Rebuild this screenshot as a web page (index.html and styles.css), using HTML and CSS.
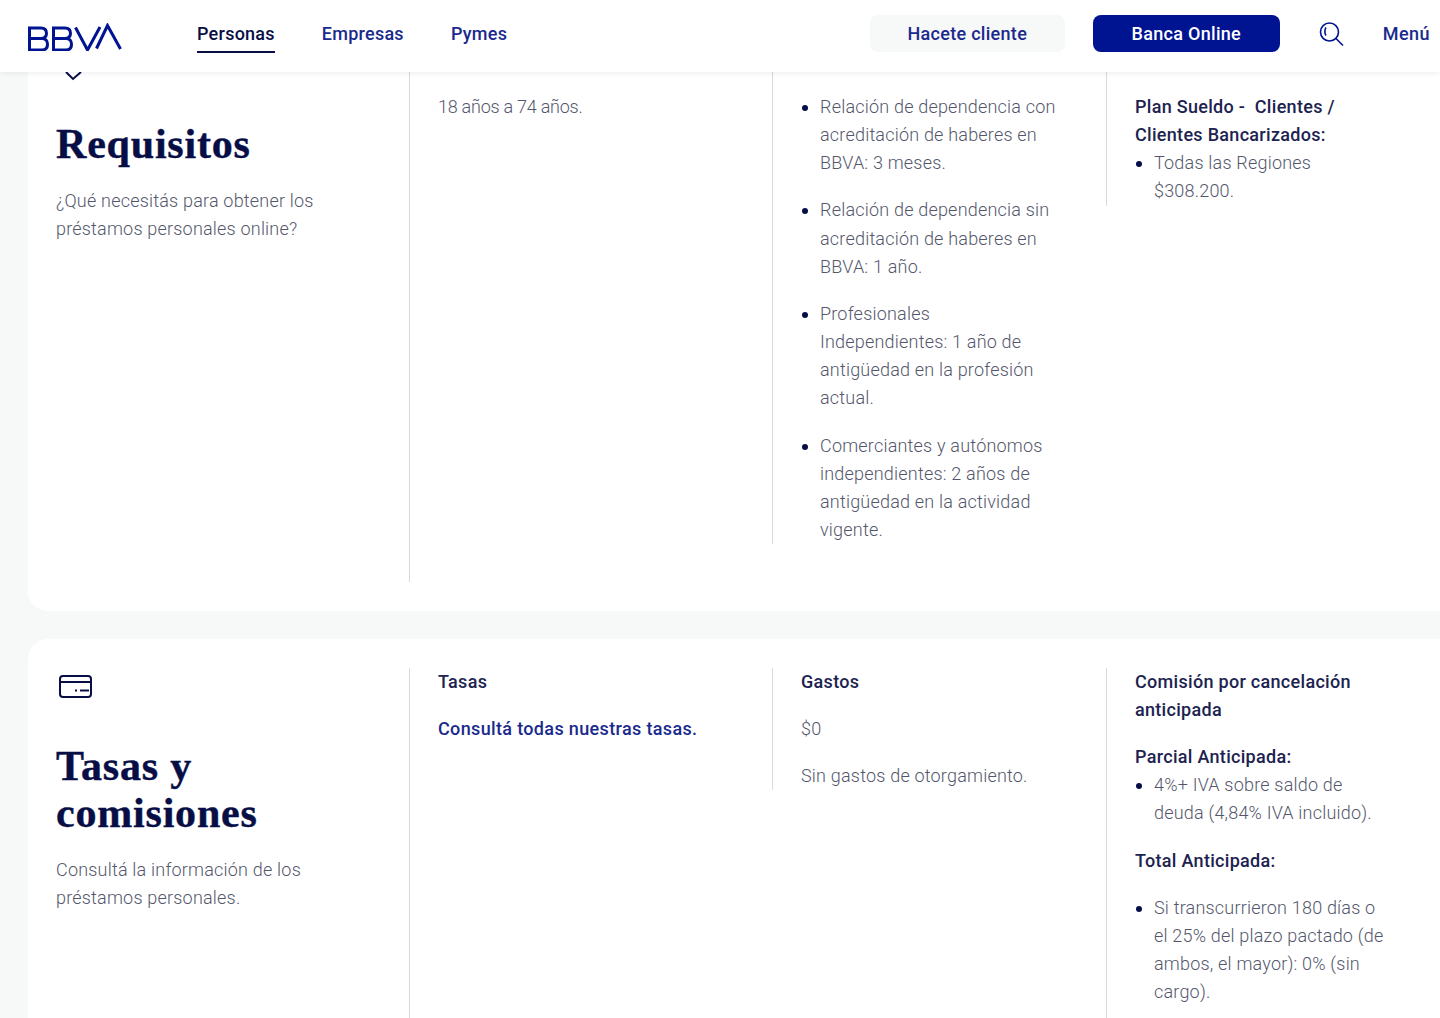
FILE: index.html
```html
<!DOCTYPE html>
<html>
<head>
  <title>Préstamos personales | BBVA</title>
  <link rel="stylesheet" href="styles.css">
</head>
<body>
  <!-- Header -->
  <header class="header">
    <svg class="logo" viewBox="0 0 94 28" fill="none" stroke="#001391" stroke-width="3">
      <path d="M1.500 5h11.500c3.500 0 5.500 2 5.500 5.300s-2 5.200-5.500 5.200H1.500M1.500 3.500V27h12.500c3.500 0 5.500-2.200 5.500-5.700s-2-5.800-5.500-5.800"></path>
      <path d="M25.500 5h11.500c3.500 0 5.500 2 5.500 5.300s-2 5.200-5.500 5.200H25.500M25.500 3.500V27h12.500c3.500 0 5.500-2.200 5.500-5.700s-2-5.800-5.500-5.800"></path>
      <path d="M47.500 4.500l12 22.500 12.500-23"></path>
      <path d="M68.500 25.500l11-23 13 23.500"></path>
    </svg>
    <nav class="nav">
      <a class="nav-link active">Personas</a>
      <a class="nav-link">Empresas</a>
      <a class="nav-link">Pymes</a>
    </nav>
    <div class="header-actions">
      <a class="btn btn-light">Hacete cliente</a>
      <a class="btn btn-primary">Banca Online</a>
      <svg class="search-icon" viewBox="0 0 26 26" fill="none" stroke="#001391" stroke-width="1.6">
        <circle cx="10.500" cy="11" r="9"></circle>
        <path d="M7 6.500c-1.500 2-1.500 6 0 8M17 17.500l7 7"></path>
      </svg>
      <a class="menu-link">Menú</a>
    </div>
  </header>

  <main class="main">
    <!-- Requisitos -->
    <section class="card card-top">
      <div class="intro">
        <svg class="intro-icon" viewBox="0 0 40 56" fill="none" stroke="#070e46" stroke-width="2">
          <path d="M10 26l7 7 8-7"></path>
        </svg>
        <h2>Requisitos</h2>
        <p>¿Qué necesitás para obtener los préstamos personales online?</p>
      </div>
      <div class="col col-a">
        <p class="age">18 años a 74 años.</p>
      </div>
      <div class="col col-b col-long">
        <ul class="spaced">
          <li>Relación de dependencia con acreditación de haberes en BBVA: 3 meses.</li>
          <li>Relación de dependencia sin acreditación de haberes en BBVA: 1 año.</li>
          <li>Profesionales Independientes: 1 año de antigüedad en la profesión actual.</li>
          <li>Comerciantes y autónomos independientes: 2 años de antigüedad en la actividad vigente.</li>
        </ul>
      </div>
      <div class="col col-c">
        <p class="strong tight">Plan Sueldo - &nbsp;Clientes / Clientes Bancarizados:</p>
        <ul>
          <li>Todas las Regiones $308.200.</li>
        </ul>
      </div>
    </section>

    <!-- Tasas y comisiones -->
    <section class="card">
      <div class="intro">
        <svg class="intro-icon" viewBox="0 0 40 56" fill="none" stroke="#070e46" stroke-width="2">
          <rect x="4" y="8" width="31" height="21" rx="3"></rect>
          <path d="M4 14h31M24 22.500h9M19 22.500h2"></path>
        </svg>
        <h2>Tasas y comisiones</h2>
        <p>Consultá la información de los préstamos personales.</p>
      </div>
      <div class="col col-a">
        <p class="strong">Tasas</p>
        <p><a class="link">Consultá todas nuestras tasas.</a></p>
      </div>
      <div class="col col-b">
        <p class="strong">Gastos</p>
        <p>$0</p>
        <p class="last">Sin gastos de otorgamiento.</p>
      </div>
      <div class="col col-c col-tall">
        <p class="strong">Comisión por cancelación anticipada</p>
        <p class="strong tight">Parcial Anticipada:</p>
        <ul>
          <li>4%+ IVA sobre saldo de deuda (4,84% IVA incluido).</li>
        </ul>
        <p class="strong">Total Anticipada:</p>
        <ul>
          <li>Si transcurrieron 180 días o el 25% del plazo pactado (de ambos, el mayor): 0% (sin cargo).</li>
        </ul>
      </div>
    </section>
  </main>
</body>
</html>
```

FILE: styles.css
```css
/* Base styles */
html,
body {
  height: 1018px;
  overflow: hidden;
}

body {
  margin: 0;
  background: #f7f8f8;
  font-family: Roboto, "Liberation Sans", sans-serif;
  font-size: 18px;
  font-weight: 300;
  line-height: 28.16px;
  letter-spacing: 0.2px;
  color: #54576c;
}

p {
  margin: 0 0 19px;
}

/* Header */
.header {
  position: relative;
  z-index: 2;
  display: flex;
  align-items: center;
  height: 72px;
  box-sizing: border-box;
  padding: 0 10px 5px 28px;
  background: #ffffff;
  box-shadow: 0 1px 6px rgba(7, 14, 70, 0.08);
}

.logo {
  width: 94px;
  height: 28px;
  margin-top: 7px;
  margin-right: 75px;
}

.nav {
  display: flex;
  gap: 47px;
}

.nav-link {
  padding: 6px 0 2px;
  border-bottom: 2px solid transparent;
  font-weight: 500;
  letter-spacing: 0.25px;
  color: #1a2a8c;
}

.nav-link.active {
  border-bottom-color: #070e46;
  color: #070e46;
}

.header-actions {
  display: flex;
  align-items: center;
  margin-left: auto;
}

.btn {
  display: flex;
  align-items: center;
  justify-content: center;
  height: 37px;
  box-sizing: border-box;
  padding-top: 2px;
  border-radius: 8px;
  font-weight: 500;
  letter-spacing: 0.3px;
}

.btn-light {
  width: 195px;
  margin-right: 28px;
  background: #f7f8f8;
  color: #1a2a8c;
}

.btn-primary {
  width: 187px;
  margin-right: 39px;
  background: #001391;
  color: #ffffff;
}

.search-icon {
  width: 26px;
  height: 26px;
  margin-right: 38px;
}

.menu-link {
  padding-top: 2px;
  font-weight: 500;
  letter-spacing: 0.45px;
  color: #1a2a8c;
}

/* Cards */
.main {
  padding-left: 28px;
}

.card {
  display: grid;
  grid-template-columns: 381px 363px 334px 1fr;
  align-items: start;
  margin-bottom: 28px;
  padding-top: 29px;
  padding-bottom: 29px;
  border-radius: 20px 0 0 20px;
  background: #ffffff;
}

.card-top {
  margin-top: -55px;
}

.intro {
  padding: 0 40px 0 28px;
}

.intro-icon {
  display: block;
  width: 40px;
  height: 56px;
  margin-bottom: 19px;
}

.intro h2 {
  margin: 0 0 19px;
  font-family: "Liberation Serif", serif;
  font-size: 42px;
  font-weight: 700;
  line-height: 47px;
  letter-spacing: 0.8px;
  -webkit-text-stroke: 0.4px #070e46;
  color: #070e46;
}

/* Columns */
.col {
  box-sizing: border-box;
  border-left: 1px solid #d9dadd;
  padding-left: 28px;
}

.col-a {
  align-self: stretch;
}

.col-b {
  padding-right: 49px;
}

.col-c {
  width: 282px;
}

.col-tall {
  padding-bottom: 40px;
}

.card-top .col {
  padding-top: 47px;
}

.col-long {
  margin-bottom: 37.6px;
}

.col-long ul,
.col-long li:last-child,
.col p:last-child,
.col-c ul:last-child {
  margin-bottom: 0;
}

.age {
  letter-spacing: -0.25px;
}

.strong {
  font-weight: 500;
  letter-spacing: 0.3px;
  color: #1c2350;
}

.tight {
  margin-bottom: 0;
}

.link {
  font-weight: 500;
  letter-spacing: 0.35px;
  color: #1a2a8c;
}

/* Lists */
ul {
  margin: 0 0 19px;
  padding-left: 19px;
}

li::marker {
  color: #070e46;
}

.spaced li {
  margin-bottom: 19px;
}
```
